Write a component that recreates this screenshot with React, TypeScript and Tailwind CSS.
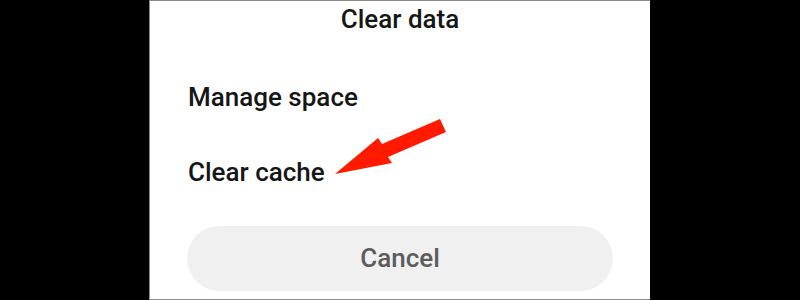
export default function App() {
  return (
    <div className="flex h-[300px] w-[800px] bg-black pl-[149px] font-['Roboto',sans-serif]">
      <div className="relative flex h-[300px] w-[501px] flex-col border-y border-l border-[#8a8a8a] bg-white px-[37px]">
        <h1 className="mt-[1px] text-center text-[26px] font-medium leading-[34px] text-[#161616]">Clear data</h1>
        <div className="mt-[45px] flex flex-col gap-[43px] pl-[1px]">
          <p className="text-[26px] font-medium leading-[32px] text-[#161616]">Manage space</p>
          <p className="text-[26px] font-medium leading-[32px] text-[#161616]">Clear cache</p>
        </div>
        <button className="mt-[38px] h-[65px] w-full rounded-full bg-[#f0f0f0] text-[26px] font-medium text-[#5c5c5c]">
          Cancel
        </button>
        <svg className="absolute left-0 top-0" width="501" height="300" viewBox="150 0 501 300">
          <polygon points="335,173 378,137 382,143 440,118 446,131 388,156 392,162" fill="#ff1a00" />
        </svg>
      </div>
    </div>
  );
}
